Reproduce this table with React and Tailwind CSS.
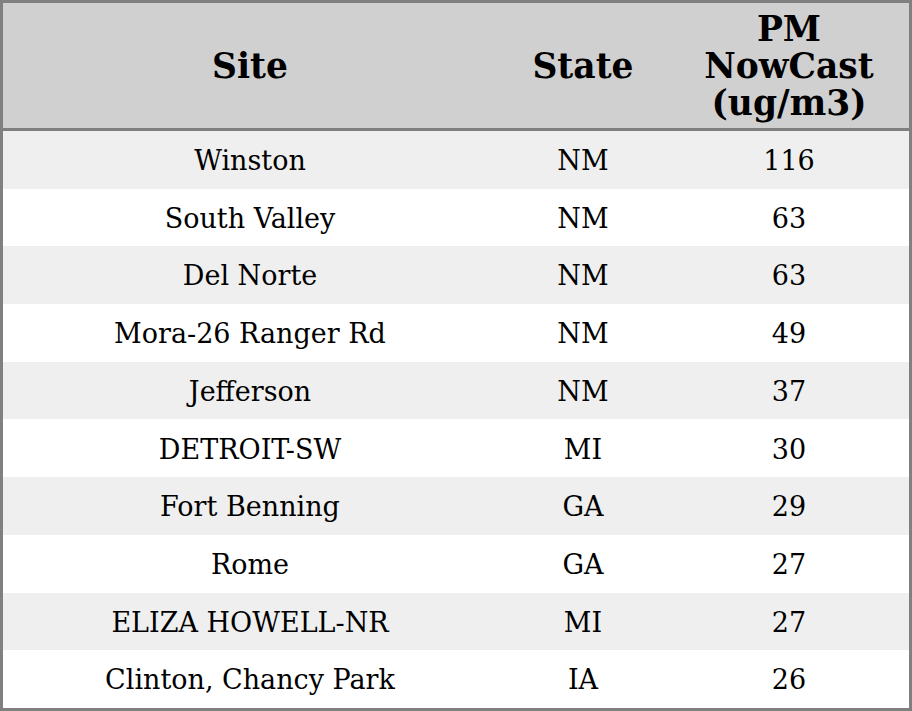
const rows = [
  { site: 'Winston', state: 'NM', pm: 116 },
  { site: 'South Valley', state: 'NM', pm: 63 },
  { site: 'Del Norte', state: 'NM', pm: 63 },
  { site: 'Mora-26 Ranger Rd', state: 'NM', pm: 49 },
  { site: 'Jefferson', state: 'NM', pm: 37 },
  { site: 'DETROIT-SW', state: 'MI', pm: 30 },
  { site: 'Fort Benning', state: 'GA', pm: 29 },
  { site: 'Rome', state: 'GA', pm: 27 },
  { site: 'ELIZA HOWELL-NR', state: 'MI', pm: 27 },
  { site: 'Clinton, Chancy Park', state: 'IA', pm: 26 }
];

const cols = 'grid grid-cols-[494px_172px_240px]';

export default function App() {
  return (
    <div
      className="w-[912px] h-[711px] border-[3px] border-[#808080] bg-white text-black"
      style={{ fontFamily: '"DejaVu Serif", serif' }}
    >
      {/* Header */}
      <div className={`${cols} h-[128px] bg-[#d0d0d0] border-b-[3px] border-[#808080] items-center text-center font-bold text-[34.5px] leading-[37px] pt-[2px]`}>
        <div>Site</div>
        <div>State</div>
        <div>
          PM
          <br />
          NowCast
          <br />
          (ug/m3)
        </div>
      </div>

      {/* Rows */}
      {rows.map((r, i) => (
        <div
          key={r.site}
          className={`${cols} h-[57.7px] items-center text-center text-[27px] pt-[3px] ${i % 2 === 0 ? 'bg-[#efefef]' : 'bg-white'}`}
        >
          <div>{r.site}</div>
          <div>{r.state}</div>
          <div>{r.pm}</div>
        </div>
      ))}
    </div>
  );
}
